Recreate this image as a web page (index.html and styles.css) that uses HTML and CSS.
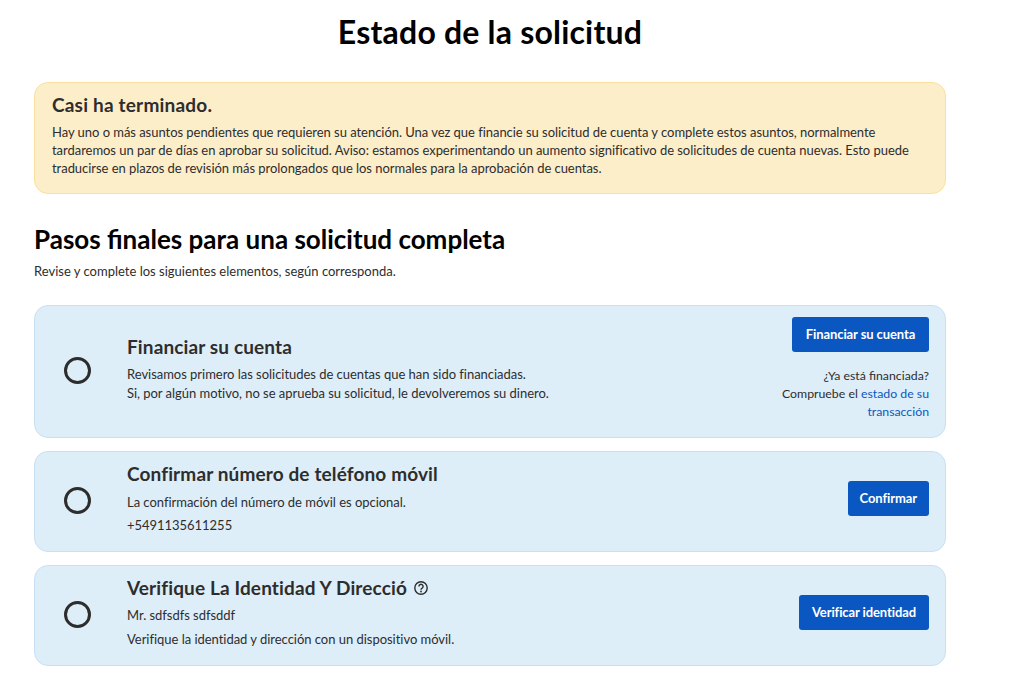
FILE: index.html
```html
<!DOCTYPE html>
<html lang="es">
<head>
<meta charset="utf-8">
<title>Estado de la solicitud</title>
<link rel="stylesheet" href="styles.css">
</head>
<body>
<main class="page">
  <h1 class="title">Estado de la solicitud</h1>
  <section class="alert">
    <h2 class="alert-title">Casi ha terminado.</h2>
    <p class="alert-text">Hay uno o más asuntos pendientes que requieren su atención. Una vez que financie su solicitud de cuenta y complete estos asuntos, normalmente<br>tardaremos un par de días en aprobar su solicitud. Aviso: estamos experimentando un aumento significativo de solicitudes de cuenta nuevas. Esto puede<br>traducirse en plazos de revisión más prolongados que los normales para la aprobación de cuentas.</p>
  </section>
  <h2 class="section-title">Pasos finales para una solicitud completa</h2>
  <p class="section-sub">Revise y complete los siguientes elementos, según corresponda.</p>
  <div class="steps">
    <article class="step step-fund">
      <span class="radio"></span>
      <div class="step-body">
        <h3 class="step-title">Financiar su cuenta</h3>
        <p class="step-lines">Revisamos primero las solicitudes de cuentas que han sido financiadas.<br>Si, por algún motivo, no se aprueba su solicitud, le devolveremos su dinero.</p>
      </div>
      <div class="step-action step-action-col">
        <a class="btn" href="#">Financiar su cuenta</a>
        <p class="note">¿Ya está financiada?<br>Compruebe el <a class="link" href="#">estado de su transacción</a></p>
      </div>
    </article>
    <article class="step">
      <span class="radio"></span>
      <div class="step-body">
        <h3 class="step-title">Confirmar número de teléfono móvil</h3>
        <p class="step-line">La confirmación del número de móvil es opcional.</p>
        <p class="step-line">+5491135611255</p>
      </div>
      <div class="step-action">
        <a class="btn btn-compact" href="#">Confirmar</a>
      </div>
    </article>
    <article class="step step-verify">
      <span class="radio"></span>
      <div class="step-body">
        <h3 class="step-title">Verifique La Identidad Y Direcció
          <svg class="help" viewBox="0 0 16 16" width="16" height="16" aria-hidden="true">
            <circle cx="8" cy="8" r="6.2" fill="none" stroke="#2d2d2d" stroke-width="1.4"/>
            <path d="M5.9 6.4a2.1 2.1 0 1 1 3.2 1.8c-.7.4-1.1.8-1.1 1.5" fill="none" stroke="#2d2d2d" stroke-width="1.4"/>
            <circle cx="8" cy="11.5" r=".9" fill="#2d2d2d"/>
          </svg>
        </h3>
        <p class="step-line">Mr. sdfsdfs sdfsddf</p>
        <p class="step-line">Verifique la identidad y dirección con un dispositivo móvil.</p>
      </div>
      <div class="step-action">
        <a class="btn" href="#">Verificar identidad</a>
      </div>
    </article>
  </div>
</main>
</body>
</html>
```
FILE: styles.css
```css
* { box-sizing: border-box; }
html, body { margin: 0; background: #fff; }
body {
  font-family: Lato, "Open Sans", sans-serif;
  color: #2d2d2d;
  height: 695px;
  overflow: hidden;
}
.page { width: 912px; margin-left: 34px; }
.title {
  margin: 0;
  padding-top: 13px;
  height: 82px;
  font-size: 32px;
  line-height: 38px;
  font-weight: 700;
  letter-spacing: 0.2px;
  color: #000;
  text-align: center;
}
.alert {
  height: 112px;
  padding: 11px 17px;
  background: #fdeeca;
  border: 1px solid #fadf9e;
  border-radius: 14px;
}
.alert-title {
  margin: 0 0 7px;
  font-size: 19px;
  line-height: 22px;
  font-weight: 700;
  letter-spacing: 0.2px;
}
.alert-text {
  margin: 0;
  font-size: 13px;
  line-height: 18px;
  letter-spacing: -0.04px;
}
.section-title {
  margin: 29px 0 0;
  font-size: 26px;
  line-height: 32px;
  font-weight: 700;
  color: #000;
}
.section-sub {
  margin: 7px 0 0;
  font-size: 13px;
  line-height: 18px;
}
.steps {
  display: flex;
  flex-direction: column;
  gap: 13px;
  margin-top: 25px;
}
.step {
  display: flex;
  align-items: center;
  height: 101px;
  padding: 0 16px 0 29px;
  background: #deeef9;
  border: 1px solid #c8e0f4;
  border-radius: 14px;
}
.step-fund { height: 133px; }
.radio {
  flex: none;
  width: 27px;
  height: 27px;
  margin-bottom: 2px;
  border: 3px solid #2d2d2d;
  border-radius: 50%;
}
.step-body {
  flex: 1;
  margin-left: 36px;
  padding-bottom: 7px;
}
.step-fund .step-body { padding-bottom: 4px; }
.step-title {
  display: flex;
  align-items: center;
  gap: 6px;
  margin: 0 0 8px;
  font-size: 19px;
  line-height: 22px;
  font-weight: 700;
  letter-spacing: 0.13px;
}
.step-fund .step-title { margin-bottom: 7px; }
.step-lines, .step-line {
  margin: 0;
  font-size: 13px;
  line-height: 18px;
  letter-spacing: -0.03px;
}
.step-lines { line-height: 19px; }
.step-line + .step-line { margin-top: 5px; }
.step-verify .step-title { margin-bottom: 7px; }
.step-verify .step-line + .step-line { margin-top: 6px; }
.step-action {
  flex: none;
  display: flex;
  justify-content: flex-end;
  margin-bottom: 6px;
}
.step-action-col {
  flex-direction: column;
  align-items: flex-end;
  width: 160px;
  margin-bottom: 5px;
}
.btn {
  display: block;
  height: 35px;
  padding: 0 13px;
  background: #0b57c2;
  border-radius: 3px;
  color: #fff;
  font-size: 13px;
  line-height: 35px;
  font-weight: 700;
  letter-spacing: -0.1px;
  text-align: center;
  text-decoration: none;
  white-space: nowrap;
}
.btn-compact { padding: 0 12px; }
.step-action-col .btn { min-width: 137px; }
.note {
  margin: 15px 0 0;
  font-size: 12.3px;
  line-height: 18px;
  text-align: right;
}
.link { color: #0b57c2; text-decoration: none; }
```
